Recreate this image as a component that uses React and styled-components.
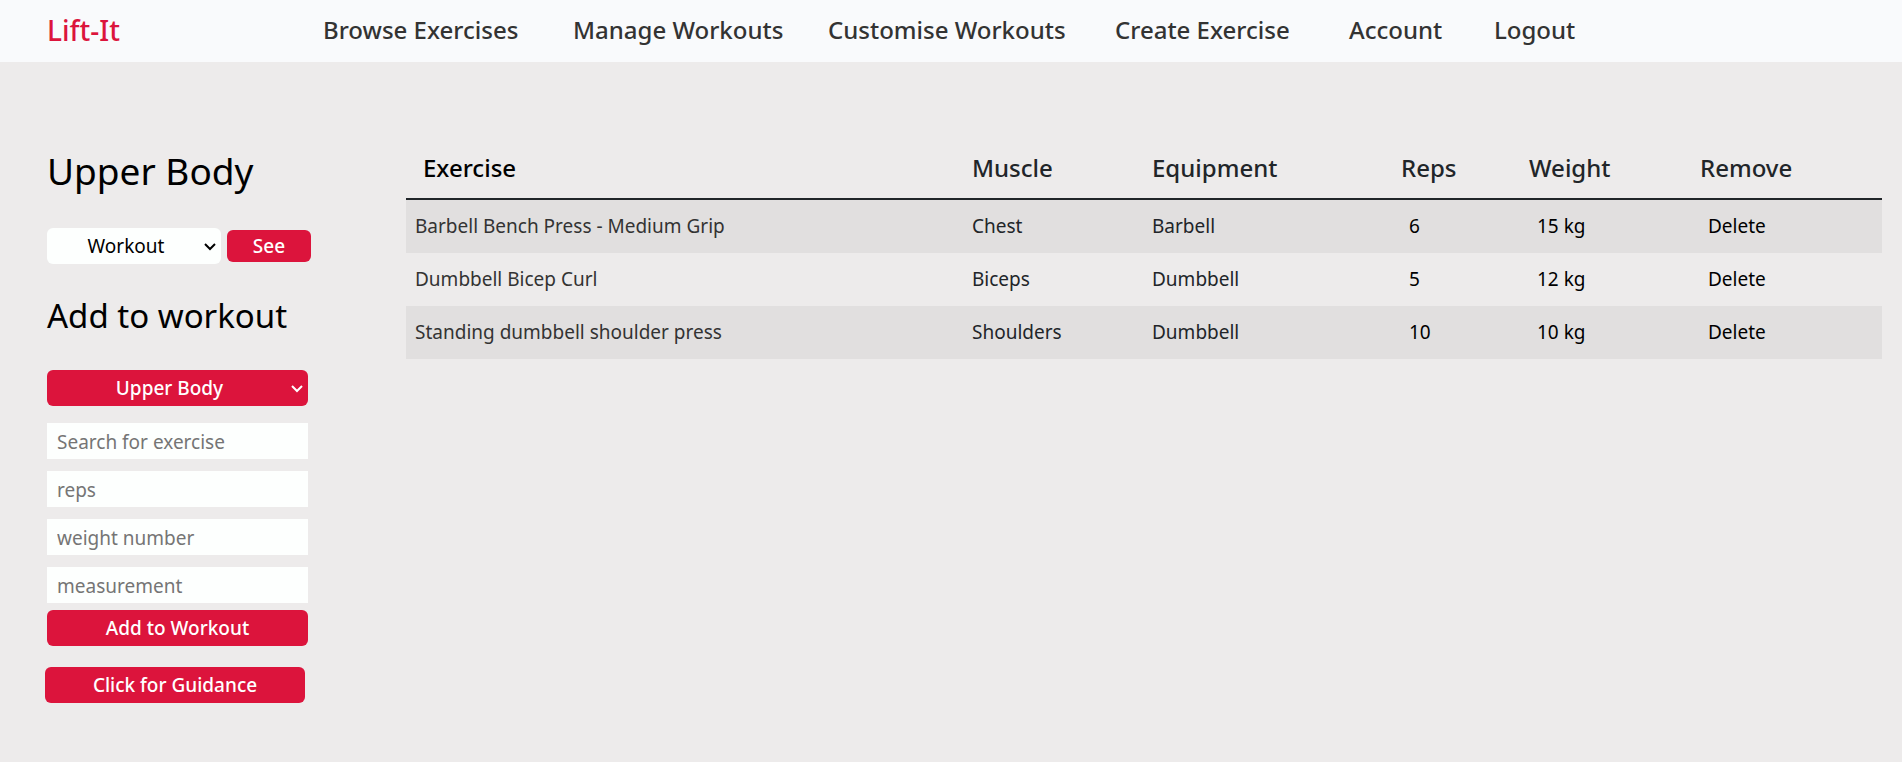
import React from 'react';
import styled, { createGlobalStyle, css } from 'styled-components';

const red = '#dc143c';

const GlobalStyle = createGlobalStyle`
  *, *::before, *::after { box-sizing: border-box; }
  body {
    margin: 0;
    background: #edebeb;
    color: #212529;
    font-family: "Trebuchet MS", "Noto Sans", sans-serif;
    font-size: 19px;
    line-height: 28px;
  }
  button, input, select { font: inherit; }
`;

const Navbar = styled.nav`
  display: flex;
  align-items: center;
  height: 62px;
  padding: 0 47px 2px;
  background: #f9fafc;
  font-size: 24px;
  font-weight: 500;
`;

const Brand = styled.a`
  flex: 0 0 276px;
  color: ${red};
  font-size: 28px;
  text-decoration: none;
`;

const NavLinks = styled.ul`
  display: grid;
  grid-template-columns: 250px 255px 287px 234px 145px auto;
  margin: 0;
  padding: 0;
  list-style: none;
`;

const NavLink = styled.a`
  color: #333;
  text-decoration: none;
  white-space: nowrap;
`;

const Layout = styled.main`
  display: grid;
  grid-template-columns: 265px minmax(0, 1fr);
  column-gap: 94px;
  padding: 78px 20px 40px 47px;
`;

const Sidebar = styled.aside`
  display: flex;
  flex-direction: column;
  padding-top: 7px;
`;

const Title = styled.h1`
  margin: 0 0 33px;
  color: #000;
  font-size: 37px;
  font-weight: 400;
  line-height: 48px;
`;

const Subtitle = styled.h2`
  margin: 28px 0 30px;
  color: #000;
  font-size: 33px;
  font-weight: 400;
  line-height: 48px;
`;

const PickForm = styled.form`
  display: flex;
  align-items: center;
  gap: 6px;
`;

const AddForm = styled.form`
  display: flex;
  flex-direction: column;
  width: 261px;
`;

const filled = css`
  background: ${red};
  color: #fff;
  font-weight: 500;
`;

const SelectBox = styled.span`
  position: relative;
  display: block;
  width: ${(p) => (p.$wide ? '100%' : '174px')};
  color: ${(p) => (p.$wide ? '#fff' : '#000')};
`;

const Select = styled.select`
  display: block;
  width: 100%;
  height: 36px;
  padding: 0 16px 0 0;
  border: 0;
  border-radius: 6px;
  appearance: none;
  background: #fdfffe;
  color: #000;
  text-align: center;
  ${(p) => p.$filled && filled}
`;

const Chevron = styled.svg`
  position: absolute;
  top: 15px;
  right: 5px;
  width: 12px;
  height: 8px;
  fill: none;
  stroke: currentColor;
  stroke-width: 2;
  pointer-events: none;
`;

const Fields = styled.div`
  display: grid;
  gap: 12px;
  margin: 17px 0 7px;
`;

const Field = styled.input`
  width: 100%;
  height: 36px;
  padding: 1px 10px 0;
  border: 0;
  background: #fdfffe;
  color: #000;
  &::placeholder { color: #757575; opacity: 1; }
`;

const Button = styled.button`
  width: ${(p) => (p.$small ? '84px' : '100%')};
  height: ${(p) => (p.$small ? '32px' : '36px')};
  padding: 0;
  border: 0;
  border-radius: 6px;
  ${filled}
`;

const Guidance = styled.div`
  width: 260px;
  margin: 21px 0 0 -2px;
`;

const Table = styled.table`
  width: 100%;
  table-layout: fixed;
  border-spacing: 0;
  align-self: start;
`;

const HeadCell = styled.th`
  width: ${(p) => p.$width};
  height: 60px;
  padding: 0 9px 2px;
  border-bottom: 2px solid #212529;
  font-size: 24px;
  font-weight: 500;
  text-align: left;
`;

const Row = styled.tr`
  &:nth-child(odd) { background: #e1dfdf; }
`;

const Cell = styled.td`
  height: 53px;
  padding: 0 9px 2px;
`;

const ExerciseLink = styled.a`
  color: #333;
  text-decoration: none;
`;

const PlainButton = styled.button`
  padding: 0 8px;
  border: 0;
  background: transparent;
  color: #000;
`;

const links = ['Browse Exercises', 'Manage Workouts', 'Customise Workouts', 'Create Exercise', 'Account', 'Logout'];

const columns = [
  ['Exercise', 'auto'],
  ['Muscle', '180px'],
  ['Equipment', '249px'],
  ['Reps', '128px'],
  ['Weight', '171px'],
  ['Remove', '191px'],
];

const rows = [
  { name: 'Barbell Bench Press - Medium Grip', muscle: 'Chest', equipment: 'Barbell', reps: '6', weight: '15 kg' },
  { name: 'Dumbbell Bicep Curl', muscle: 'Biceps', equipment: 'Dumbbell', reps: '5', weight: '12 kg' },
  { name: 'Standing dumbbell shoulder press', muscle: 'Shoulders', equipment: 'Dumbbell', reps: '10', weight: '10 kg' },
];

const fields = ['Search for exercise', 'reps', 'weight number', 'measurement'];

function Dropdown({ label, option, wide }) {
  return (
    <SelectBox $wide={wide}>
      <Select $filled={wide} aria-label={label}>
        <option>{option}</option>
      </Select>
      <Chevron viewBox="0 0 12 8" aria-hidden="true">
        <path d="M1 1l5 5 5-5" />
      </Chevron>
    </SelectBox>
  );
}

export default function App() {
  return (
    <>
      <GlobalStyle />
      <Navbar>
        <Brand href="#">Lift-It</Brand>
        <NavLinks>
          {links.map((l) => (
            <li key={l}><NavLink href="#">{l}</NavLink></li>
          ))}
        </NavLinks>
      </Navbar>
      <Layout>
        <Sidebar>
          <Title>Upper Body</Title>
          <PickForm onSubmit={(e) => e.preventDefault()}>
            <Dropdown label="Workout" option="Workout" />
            <Button $small>See</Button>
          </PickForm>
          <Subtitle>Add to workout</Subtitle>
          <AddForm onSubmit={(e) => e.preventDefault()}>
            <Dropdown wide label="Target workout" option="Upper Body" />
            <Fields>
              {fields.map((f) => <Field key={f} placeholder={f} aria-label={f} />)}
            </Fields>
            <Button>Add to Workout</Button>
          </AddForm>
          <Guidance>
            <Button type="button">Click for Guidance</Button>
          </Guidance>
        </Sidebar>
        <Table>
          <thead>
            <tr>
              {columns.map(([name, width]) => (
                <HeadCell key={name} $width={width} scope="col">
                  {name === 'Exercise' ? <PlainButton>{name}</PlainButton> : name}
                </HeadCell>
              ))}
            </tr>
          </thead>
          <tbody>
            {rows.map((r) => (
              <Row key={r.name}>
                <Cell><ExerciseLink href="#">{r.name}</ExerciseLink></Cell>
                <Cell>{r.muscle}</Cell>
                <Cell>{r.equipment}</Cell>
                <Cell><PlainButton>{r.reps}</PlainButton></Cell>
                <Cell><PlainButton>{r.weight}</PlainButton></Cell>
                <Cell><PlainButton>Delete</PlainButton></Cell>
              </Row>
            ))}
          </tbody>
        </Table>
      </Layout>
    </>
  );
}
